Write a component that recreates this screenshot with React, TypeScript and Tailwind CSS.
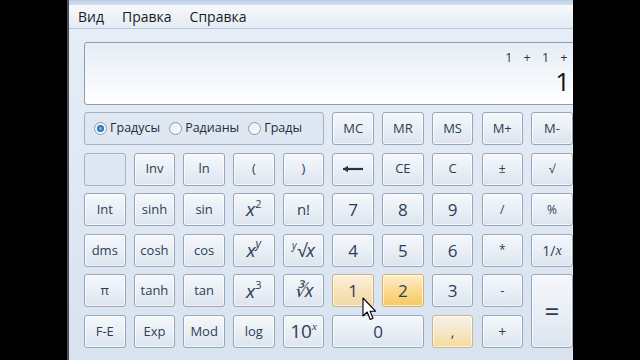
import React from "react";
import clsx from "clsx";

const sans = "font-['Open_Sans','Noto_Sans',sans-serif]";
const serif = "font-['Liberation_Serif','DejaVu_Serif',serif] italic";

type KeyProps = {
  children?: React.ReactNode;
  className?: string;
  tone?: "normal" | "blank" | "hover" | "pressed" | "warm";
};

function Key({ children, className, tone = "normal" }: KeyProps) {
  return (
    <div
      className={clsx(
        "flex items-center justify-center rounded-[3px] border text-[#2e3e52] shadow-[inset_0_0_0_1px_rgba(255,255,255,0.65)]",
        tone === "normal" && "border-[#97a6b9] bg-linear-to-b from-[#f5f8fc] via-[#e9eff6] to-[#dce4ee]",
        tone === "blank" && "border-[#a6b3c3] bg-[#dde6f1] shadow-none",
        tone === "hover" && "border-[#c9b27a] bg-linear-to-b from-[#fcf1de] via-[#f7e2bb] to-[#f3d9a8]",
        tone === "pressed" && "border-[#d8b35c] bg-linear-to-b from-[#fdeed2] via-[#fad98f] to-[#f6c861]",
        tone === "warm" && "border-[#c7b78e] bg-linear-to-b from-[#f4f1ea] via-[#f6e7c8] to-[#f7d99a]",
        sans,
        className
      )}
    >
      {children}
    </div>
  );
}

function Radio({ checked, label }: { checked?: boolean; label: string }) {
  return (
    <div className="flex items-center gap-[3px]">
      <span className="flex size-[13px] items-center justify-center rounded-full border border-[#8e9aab] bg-linear-to-br from-[#e9edf2] to-[#fbfcfd]">
        {checked && (
          <span className="size-[7px] rounded-full bg-radial from-[#7fc0f0] via-[#2b78c4] to-[#184f8f]" />
        )}
      </span>
      <span className="text-[12.5px] text-[#1e2c3c]">{label}</span>
    </div>
  );
}

function Cursor() {
  return (
    <svg
      className="pointer-events-none absolute left-[362px] top-[297px]"
      width="15"
      height="25"
      viewBox="0 0 15 25"
    >
      <path
        d="M1 1 L1 19 L5.2 15 L8.2 22.5 L11 21.3 L8.1 14.2 L13.5 14.2 Z"
        fill="#fff"
        stroke="#000"
        strokeWidth="1.1"
        strokeLinejoin="round"
      />
    </svg>
  );
}

export default function App() {
  return (
    <div className="relative flex h-[360px] w-[640px] overflow-hidden bg-black">
      <div className="w-[67px] shrink-0 bg-black" />
      <div className="flex w-[506px] shrink-0 flex-col overflow-hidden border-l-2 border-[#4a4f57] bg-linear-to-b from-[#e7eef7] to-[#d8e3f0]">
        <div className="h-[5px] bg-linear-to-b from-[#bccfe6] to-[#d3e0ef]" />
        <div
          className={clsx(
            "flex h-[24px] items-center gap-[18px] border-b border-[#b9c6d6] bg-linear-to-b from-[#f7f9fc] to-[#e4ebf4] pl-[9px] text-[14px] text-[#1b1b1b]",
            sans
          )}
        >
          <span>Вид</span>
          <span>Правка</span>
          <span>Справка</span>
        </div>

        <div className="pl-[15px] pt-[13px]">
          <div className="flex h-[63px] w-[500px] flex-col items-end rounded-[3px] border border-[#8d9cb0] bg-linear-to-b from-[#e6edf6] to-[#ffffff] pr-[13px] pt-[6px]">
            <div className={clsx("text-[12.5px] tracking-[2.5px] text-[#333] [word-spacing:3px]", sans)}>
              1 + 1 +
            </div>
            <div className={clsx("-mt-[2px] text-[26px] leading-[30px] text-[#111]", sans)}>1</div>
          </div>

          <div className="mt-[7px] grid grid-cols-[repeat(10,41.5px)] grid-rows-[repeat(6,33px)] gap-x-[8.2px] gap-y-[7.6px] text-[13px]">
            <div
              className={clsx(
                "col-span-5 flex items-center gap-[9px] rounded-[3px] border border-[#a2b0c1] bg-[#dee7f2] pl-[9px]",
                sans
              )}
            >
              <Radio checked label="Градусы" />
              <Radio label="Радианы" />
              <Radio label="Грады" />
            </div>
            <Key>MC</Key>
            <Key>MR</Key>
            <Key>MS</Key>
            <Key>M+</Key>
            <Key>M-</Key>

            <Key tone="blank" />
            <Key>Inv</Key>
            <Key>ln</Key>
            <Key>(</Key>
            <Key>)</Key>
            <Key>
              <svg width="22" height="8" viewBox="0 0 22 8">
                <path d="M1 4 L21 4" stroke="#24364c" strokeWidth="2.2" />
                <path d="M1 4 L6 0.8 L6 7.2 Z" fill="#24364c" />
              </svg>
            </Key>
            <Key>CE</Key>
            <Key>C</Key>
            <Key className="text-[12px]">±</Key>
            <Key className="text-[12px]">√</Key>

            <Key>Int</Key>
            <Key>sinh</Key>
            <Key>sin</Key>
            <Key className={clsx("text-[19px]", serif)}>
              x<sup className="text-[11px] not-italic">2</sup>
            </Key>
            <Key className="text-[15px]">n!</Key>
            <Key className="text-[17px]">7</Key>
            <Key className="text-[17px]">8</Key>
            <Key className="text-[17px]">9</Key>
            <Key className="text-[12px]">/</Key>
            <Key className="text-[12px]">%</Key>

            <Key>dms</Key>
            <Key>cosh</Key>
            <Key>cos</Key>
            <Key className={clsx("text-[19px]", serif)}>
              x<sup className="text-[12px]">y</sup>
            </Key>
            <Key className={clsx("text-[18px]", serif)}>
              <sup className="text-[10px]">y</sup>√x
            </Key>
            <Key className="text-[17px]">4</Key>
            <Key className="text-[17px]">5</Key>
            <Key className="text-[17px]">6</Key>
            <Key className="text-[12px]">*</Key>
            <Key className="text-[14px]">
              1/<span className={serif}>x</span>
            </Key>

            <Key>π</Key>
            <Key>tanh</Key>
            <Key>tan</Key>
            <Key className={clsx("text-[19px]", serif)}>
              x<sup className="text-[11px] not-italic">3</sup>
            </Key>
            <Key className={clsx("text-[18px]", serif)}>∛x</Key>
            <Key tone="hover" className="text-[17px]">1</Key>
            <Key tone="pressed" className="text-[17px]">2</Key>
            <Key className="text-[17px]">3</Key>
            <Key className="text-[13px]">-</Key>
            <Key className="row-span-2 text-[26px]">=</Key>

            <Key>F-E</Key>
            <Key>Exp</Key>
            <Key>Mod</Key>
            <Key>log</Key>
            <Key className="text-[19px]">
              10<sup className={clsx("text-[11px]", serif)}>x</sup>
            </Key>
            <Key className="col-span-2 text-[17px]">0</Key>
            <Key tone="warm" className="text-[14px]">,</Key>
            <Key className="text-[14px]">+</Key>
          </div>
        </div>
      </div>
      <div className="flex-1 bg-black" />
      <Cursor />
    </div>
  );
}
